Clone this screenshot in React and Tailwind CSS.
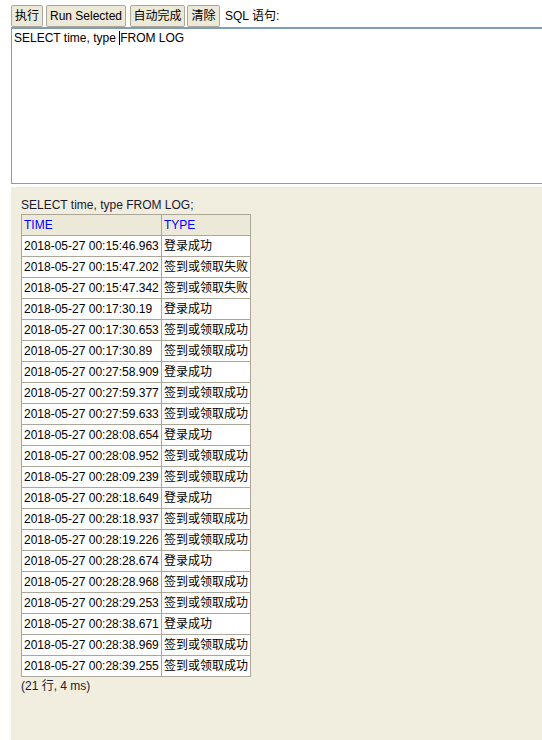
import React from 'react';

const rows = [
  ['2018-05-27 00:15:46.963', '登录成功'],
  ['2018-05-27 00:15:47.202', '签到或领取失败'],
  ['2018-05-27 00:15:47.342', '签到或领取失败'],
  ['2018-05-27 00:17:30.19', '登录成功'],
  ['2018-05-27 00:17:30.653', '签到或领取成功'],
  ['2018-05-27 00:17:30.89', '签到或领取成功'],
  ['2018-05-27 00:27:58.909', '登录成功'],
  ['2018-05-27 00:27:59.377', '签到或领取成功'],
  ['2018-05-27 00:27:59.633', '签到或领取成功'],
  ['2018-05-27 00:28:08.654', '登录成功'],
  ['2018-05-27 00:28:08.952', '签到或领取成功'],
  ['2018-05-27 00:28:09.239', '签到或领取成功'],
  ['2018-05-27 00:28:18.649', '登录成功'],
  ['2018-05-27 00:28:18.937', '签到或领取成功'],
  ['2018-05-27 00:28:19.226', '签到或领取成功'],
  ['2018-05-27 00:28:28.674', '登录成功'],
  ['2018-05-27 00:28:28.968', '签到或领取成功'],
  ['2018-05-27 00:28:29.253', '签到或领取成功'],
  ['2018-05-27 00:28:38.671', '登录成功'],
  ['2018-05-27 00:28:38.969', '签到或领取成功'],
  ['2018-05-27 00:28:39.255', '签到或领取成功'],
];

const font = 'font-["Liberation_Sans","Noto_Sans_CJK_SC",sans-serif]';

const Btn = ({ className = '', children }) => (
  <button className={`shrink-0 h-[22px] px-0 whitespace-nowrap text-center bg-[#ece9d8] border border-[#aca899] rounded-[2px] text-[12px] leading-none text-black ${className}`}>
    {children}
  </button>
);

export default function App() {
  return (
    <div className={`w-[542px] h-[740px] overflow-hidden bg-white pl-[11px] ${font} text-[12px] text-black`}>
      {/* toolbar */}
      <div className="flex items-center pt-[4px] h-[27px]">
        <Btn className="w-[32px]">执行</Btn>
        <Btn className="ml-[3px] w-[80px]">Run Selected</Btn>
        <Btn className="ml-[4px] w-[55px]">自动完成</Btn>
        <Btn className="ml-[2px] w-[33px]">清除</Btn>
        <span className="ml-[5px] text-[12px] whitespace-nowrap">SQL 语句:</span>
      </div>

      {/* editor */}
      <div className="w-[560px] h-[157px] border border-[#7f9db9] border-t-[2px] border-t-[#7f9db9] pl-[2px] pt-[2px] leading-[15px]">
        SELECT time, type&nbsp;<span className="border-l border-black"></span>FROM LOG
      </div>

      {/* results */}
      <div className="mt-[3px] w-[560px] h-[560px] bg-[#f1eedf] pl-[10px] pt-[10px]">
        <div className="leading-[17px] text-[#1a1a2e]">SELECT time, type FROM LOG;</div>
        <table className="border-collapse bg-white">
          <thead>
            <tr className="bg-[#ece9d8]">
              <th className="h-[21px] w-[140px] border border-[#aca899] px-[2px] text-left font-normal text-[#0000ff]">TIME</th>
              <th className="h-[21px] w-[89px] border border-[#aca899] px-[2px] text-left font-normal text-[#0000ff]">TYPE</th>
            </tr>
          </thead>
          <tbody>
            {rows.map(([t, ty]) => (
              <tr key={t}>
                <td className="h-[21px] border border-[#aca899] px-[2px] whitespace-nowrap">{t}</td>
                <td className="h-[21px] border border-[#aca899] px-[2px] whitespace-nowrap">{ty}</td>
              </tr>
            ))}
          </tbody>
        </table>
        <div className="pt-[2px] leading-[15px] text-[#1a1a2e]">(21 行, 4 ms)</div>
      </div>
    </div>
  );
}
